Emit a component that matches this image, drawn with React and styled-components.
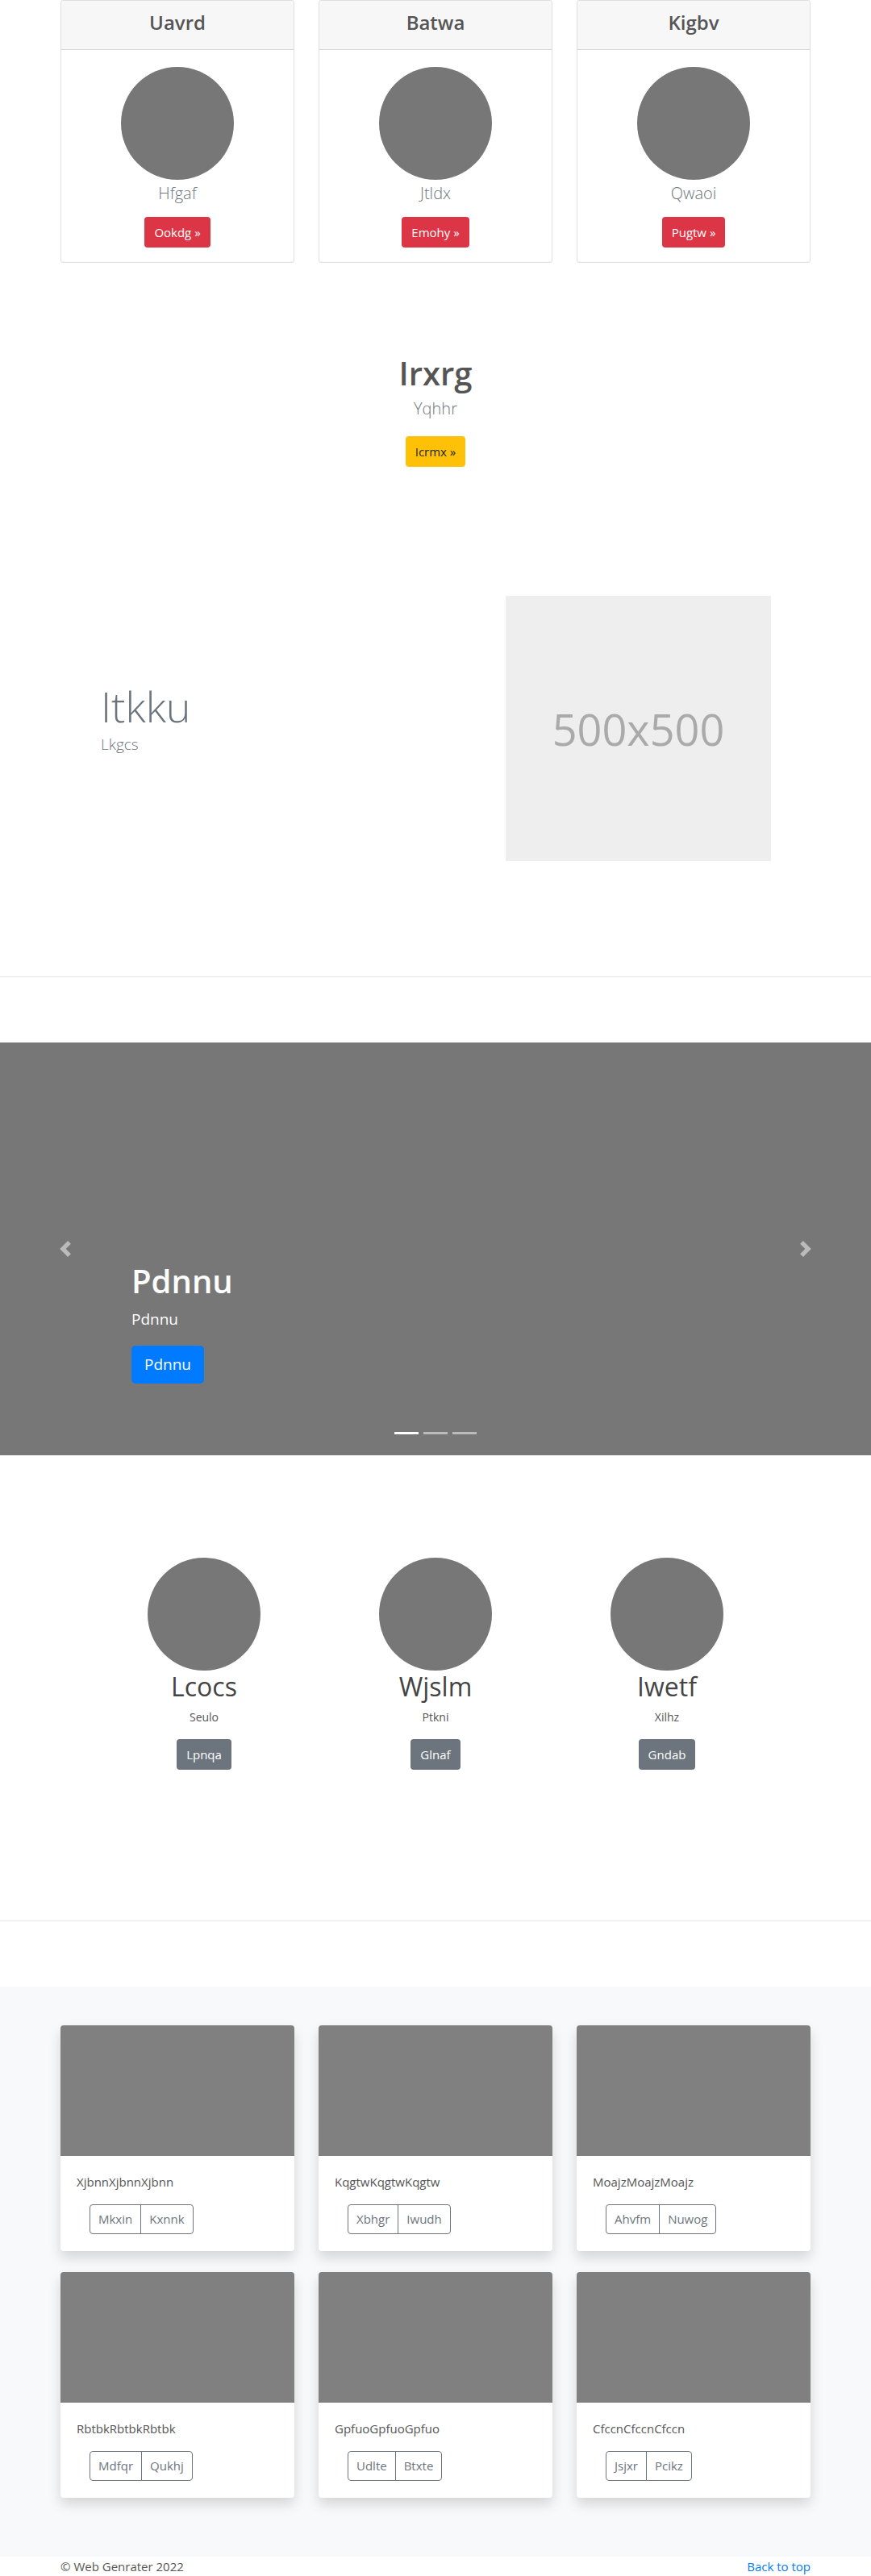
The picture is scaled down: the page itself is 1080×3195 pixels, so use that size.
import React from "react";
import styled, { createGlobalStyle } from "styled-components";

const GlobalStyle = createGlobalStyle`
  body {
    margin: 0;
    font-family: "Open Sans", "Noto Sans", sans-serif;
    color: #555;
    background: #fff;
  }
`;

const teams = [
  { title: "Uavrd", name: "Hfgaf", action: "Ookdg »" },
  { title: "Batwa", name: "Jtldx", action: "Emohy »" },
  { title: "Kigbv", name: "Qwaoi", action: "Pugtw »" },
];

const people = [
  { name: "Lcocs", sub: "Seulo", action: "Lpnqa" },
  { name: "Wjslm", sub: "Ptkni", action: "Glnaf" },
  { name: "Iwetf", sub: "Xilhz", action: "Gndab" },
];

const albums = [
  { text: "XjbnnXjbnnXjbnn", a: "Mkxin", b: "Kxnnk" },
  { text: "KqgtwKqgtwKqgtw", a: "Xbhgr", b: "Iwudh" },
  { text: "MoajzMoajzMoajz", a: "Ahvfm", b: "Nuwog" },
  { text: "RbtbkRbtbkRbtbk", a: "Mdfqr", b: "Qukhj" },
  { text: "GpfuoGpfuoGpfuo", a: "Udlte", b: "Btxte" },
  { text: "CfccnCfccnCfccn", a: "Jsjxr", b: "Pcikz" },
];

const Chevron = ({ flip }) => (
  <svg width="20" height="20" viewBox="0 0 8 8" fill="#fff">
    <path
      d={flip ? "M2.75 0l-1.5 1.5L3.75 4l-2.5 2.5L2.75 8l4-4-4-4z" : "M5.25 0l-4 4 4 4 1.5-1.5L4.25 4l2.5-2.5L5.25 0z"}
    />
  </svg>
);

const App = () => {
  return (
    <Page>
      <GlobalStyle />
      <Container>
        <TeamGrid>
          {teams.map((t) => (
            <Card key={t.title}>
              <CardHeader>{t.title}</CardHeader>
              <TeamBody>
                <Circle />
                <Lead>{t.name}</Lead>
                <Button $bg="#dc3545" $color="#fff">{t.action}</Button>
              </TeamBody>
            </Card>
          ))}
        </TeamGrid>

        <Intro>
          <IntroTitle>Irxrg</IntroTitle>
          <Lead>Yqhhr</Lead>
          <Button $bg="#ffc107" $color="#212529" $mt="19px">Icrmx »</Button>
        </Intro>

        <Feature>
          <FeatureText>
            <Display>Itkku</Display>
            <FeatureSub>Lkgcs</FeatureSub>
          </FeatureText>
          <Placeholder>500x500</Placeholder>
        </Feature>
      </Container>

      <Rule />

      <Carousel>
        <Control $side="left"><Chevron /></Control>
        <Control $side="right"><Chevron flip /></Control>
        <CaptionTitle>Pdnnu</CaptionTitle>
        <CaptionText>Pdnnu</CaptionText>
        <BigButton>Pdnnu</BigButton>
        <Indicators>
          <Indicator $active />
          <Indicator />
          <Indicator />
        </Indicators>
      </Carousel>

      <PeopleGrid>
        {people.map((p) => (
          <Person key={p.name}>
            <Circle />
            <PersonName>{p.name}</PersonName>
            <PersonSub>{p.sub}</PersonSub>
            <Button $bg="#6c757d" $color="#fff" $mt="16px">{p.action}</Button>
          </Person>
        ))}
      </PeopleGrid>

      <Rule $mt="187px" />

      <Album>
        <AlbumGrid>
          {albums.map((a) => (
            <AlbumCard key={a.text}>
              <Thumb />
              <AlbumBody>
                <AlbumText>{a.text}</AlbumText>
                <BtnGroup>
                  <OutlineBtn>{a.a}</OutlineBtn>
                  <OutlineBtn>{a.b}</OutlineBtn>
                </BtnGroup>
              </AlbumBody>
            </AlbumCard>
          ))}
        </AlbumGrid>
      </Album>

      <Footer>
        <span>© Web Genrater 2022</span>
        <TopLink href="#">Back to top</TopLink>
      </Footer>
    </Page>
  );
};

const Page = styled.div`
  width: 1080px;
`;

const Container = styled.div`
  width: 930px;
  margin: 0 auto;
`;

const TeamGrid = styled.div`
  display: grid;
  grid-template-columns: repeat(3, 290px);
  gap: 30px;
`;

const Card = styled.div`
  border: 1px solid rgba(0, 0, 0, 0.125);
  border-radius: 4px;
  overflow: hidden;
  background: #fff;
`;

const CardHeader = styled.div`
  height: 61px;
  box-sizing: border-box;
  padding-top: 12px;
  background: #f7f7f7;
  border-bottom: 1px solid rgba(0, 0, 0, 0.125);
  text-align: center;
  font-size: 24px;
  line-height: 29px;
  font-weight: 600;
  color: #555;
`;

const TeamBody = styled.div`
  display: flex;
  flex-direction: column;
  align-items: center;
  padding: 21px 20px 18px;
`;

const Circle = styled.div`
  width: 140px;
  height: 140px;
  border-radius: 50%;
  background: #777;
`;

const Lead = styled.div`
  margin-top: 2px;
  font-size: 20px;
  line-height: 30px;
  font-weight: 300;
  color: #6c757d;
`;

const Button = styled.div`
  margin-top: ${(p) => p.$mt || "14px"};
  padding: 6px 12px;
  border-radius: 4px;
  font-size: 15px;
  line-height: 26px;
  background: ${(p) => p.$bg};
  color: ${(p) => p.$color};
`;

const Intro = styled.div`
  display: flex;
  flex-direction: column;
  align-items: center;
  padding-top: 113px;
`;

const IntroTitle = styled.h1`
  margin: 0 0 3px;
  font-size: 40px;
  line-height: 48px;
  font-weight: 600;
  color: #555;
`;

const Feature = styled.div`
  display: flex;
  justify-content: space-between;
  margin-top: 160px;
  padding: 0 49px 0 50px;
`;

const FeatureText = styled.div`
  padding-top: 106px;
`;

const Display = styled.div`
  font-size: 52px;
  line-height: 62px;
  font-weight: 300;
  color: #6c757d;
`;

const FeatureSub = styled.div`
  margin-top: 3px;
  font-size: 19px;
  line-height: 26px;
  font-weight: 300;
  color: #6c757d;
`;

const Placeholder = styled.div`
  width: 329px;
  height: 329px;
  display: flex;
  align-items: center;
  justify-content: center;
  background: #eee;
  color: #aaa;
  font-size: 54px;
`;

const Rule = styled.hr`
  margin: ${(p) => p.$mt || "143px"} 0 0;
  border: 0;
  border-top: 1px solid rgba(0, 0, 0, 0.1);
`;

const Carousel = styled.div`
  position: relative;
  margin-top: 81px;
  height: 512px;
  box-sizing: border-box;
  background: #777;
  display: flex;
  flex-direction: column;
  justify-content: flex-end;
  align-items: flex-start;
  padding: 0 0 89px 163px;
  color: #fff;
`;

const Control = styled.div`
  position: absolute;
  top: 0;
  bottom: 0;
  ${(p) => p.$side}: 0;
  width: 162px;
  display: flex;
  align-items: center;
  justify-content: center;
  opacity: 0.5;
`;

const CaptionTitle = styled.div`
  font-size: 40px;
  line-height: 48px;
  font-weight: 600;
`;

const CaptionText = styled.div`
  margin-top: 8px;
  font-size: 19px;
  line-height: 30px;
`;

const BigButton = styled.div`
  margin-top: 18px;
  padding: 8px 16px;
  border-radius: 5px;
  background: #007bff;
  font-size: 19px;
  line-height: 31px;
`;

const Indicators = styled.div`
  position: absolute;
  left: 0;
  right: 0;
  bottom: 26px;
  display: flex;
  justify-content: center;
  gap: 6px;
`;

const Indicator = styled.div`
  width: 30px;
  height: 3px;
  background: #fff;
  opacity: ${(p) => (p.$active ? 1 : 0.5)};
`;

const PeopleGrid = styled.div`
  display: grid;
  grid-template-columns: repeat(3, 287px);
  justify-content: center;
  margin-top: 127px;
`;

const Person = styled.div`
  display: flex;
  flex-direction: column;
  align-items: center;
`;

const PersonName = styled.div`
  margin-top: 1px;
  font-size: 32px;
  line-height: 38px;
  color: #444;
`;

const PersonSub = styled.div`
  margin-top: 8px;
  font-size: 14px;
  line-height: 22px;
  color: #555;
`;

const Album = styled.div`
  margin-top: 81px;
  background: #f8f9fa;
  padding: 48px 0 73px;
`;

const AlbumGrid = styled.div`
  width: 930px;
  margin: 0 auto;
  display: grid;
  grid-template-columns: repeat(3, 290px);
  column-gap: 30px;
  row-gap: 26px;
`;

const AlbumCard = styled.div`
  background: #fff;
  border-radius: 4px;
  overflow: hidden;
  box-shadow: 0 8px 16px rgba(0, 0, 0, 0.15);
`;

const Thumb = styled.div`
  height: 162px;
  background: #808080;
`;

const AlbumBody = styled.div`
  padding: 20px 20px 21px;
`;

const AlbumText = styled.div`
  font-size: 15px;
  line-height: 24px;
  color: #555;
`;

const BtnGroup = styled.div`
  display: inline-flex;
  margin: 16px 0 0 16px;
  border: 1px solid #6c757d;
  border-radius: 4px;
`;

const OutlineBtn = styled.div`
  padding: 6px 10px;
  font-size: 15px;
  line-height: 23px;
  color: #6c757d;
  & + & {
    border-left: 1px solid #6c757d;
  }
`;

const Footer = styled.div`
  width: 930px;
  margin: 0 auto;
  display: flex;
  justify-content: space-between;
  font-size: 15px;
  line-height: 24px;
  color: #555;
`;

const TopLink = styled.a`
  color: #007bff;
  text-decoration: none;
`;

export default App;
